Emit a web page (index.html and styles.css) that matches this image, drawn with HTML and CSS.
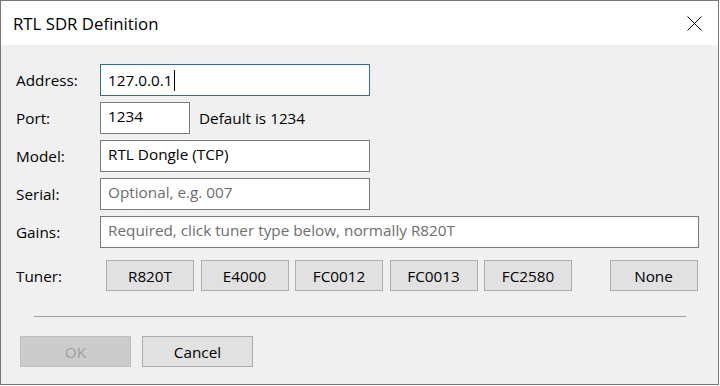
FILE: index.html
```html
<!DOCTYPE html>
<html lang="en">
<head>
  <meta charset="UTF-8">
  <title>RTL SDR Definition</title>
  <link rel="stylesheet" href="styles.css">
</head>
<body>
  <div class="window">
    <!-- title bar -->
    <div class="titlebar">
      <span class="title">RTL SDR Definition</span>
      <svg class="close" width="15" height="15" viewBox="0 0 15 15">
        <path d="M0.5 0.5 L14.5 14.5 M14.5 0.5 L0.5 14.5" stroke="#000" stroke-width="1" fill="none"/>
      </svg>
    </div>

    <div class="content">
      <div class="form">
        <label class="lbl">Address:</label>
        <div class="row">
          <div class="box wide focused">127.0.0.1<span class="caret"></span></div>
        </div>

        <label class="lbl">Port:</label>
        <div class="row">
          <div class="box port">1234</div>
          <span class="hint">Default is 1234</span>
        </div>

        <label class="lbl">Model:</label>
        <div class="row">
          <div class="box wide">RTL Dongle (TCP)</div>
        </div>

        <label class="lbl">Serial:</label>
        <div class="row">
          <div class="box wide placeholder">Optional, e.g. 007</div>
        </div>

        <label class="lbl">Gains:</label>
        <div class="row">
          <div class="box full placeholder">Required, click tuner type below, normally R820T</div>
        </div>

        <label class="lbl tuner-lbl">Tuner:</label>
        <div class="row tuners">
          <button class="btn tuner">R820T</button>
          <button class="btn tuner">E4000</button>
          <button class="btn tuner">FC0012</button>
          <button class="btn tuner">FC0013</button>
          <button class="btn tuner">FC2580</button>
          <button class="btn tuner none">None</button>
        </div>
      </div>

      <div class="separator"></div>

      <div class="actions">
        <button class="btn action" disabled>OK</button>
        <button class="btn action">Cancel</button>
      </div>
    </div>
  </div>
</body>
</html>
```

FILE: styles.css
```css
html, body {
  margin: 0;
  padding: 0;
  width: 720px;
  height: 386px;
  overflow: hidden;
  font-family: 'Open Sans', 'Noto Sans', sans-serif;
  font-size: 15.3px;
  color: #000;
}

.window {
  width: 719px;
  height: 385px;
  box-sizing: border-box;
  border: 1px solid #777;
  background-color: #f0f0f0;
}

.titlebar {
  height: 44px;
  background-color: #fff;
  display: flex;
  align-items: center;
  justify-content: space-between;
  padding: 0 16px 0 12px;
}

.title {
  font-size: 16.8px;
}

.content {
  padding: 19px 0 0 15px;
}

.form {
  display: grid;
  grid-template-columns: 84px auto;
  row-gap: 6px;
}

.lbl {
  display: flex;
  align-items: center;
  height: 32px;
}

.row {
  display: flex;
  align-items: center;
  height: 32px;
}

.box {
  height: 32px;
  box-sizing: border-box;
  border: 1px solid #7a7a7a;
  background-color: #fff;
  padding: 1px 7px 0;
  line-height: 24px;
  white-space: nowrap;
  overflow: hidden;
}

.box.wide {
  width: 270px;
}

.box.port {
  width: 90px;
}

.box.full {
  width: 599px;
}

.box.focused {
  border-color: #2e6f93;
  padding-top: 3px;
}

.box.placeholder {
  color: #6d6d6d;
}

.caret {
  display: inline-block;
  width: 1px;
  height: 21px;
  background-color: #000;
  vertical-align: -5px;
  margin-left: 1px;
}

.hint {
  margin-left: 9px;
}

.tuner-lbl,
.tuners {
  margin-top: 6px;
}

.tuners {
  height: 31px;
  margin-left: 6px;
}

.btn {
  font-family: inherit;
  font-size: 15.3px;
  color: #000;
  height: 31px;
  box-sizing: border-box;
  background-color: #e1e1e1;
  border: 1px solid #adadad;
  padding: 0;
  margin: 0;
}

.btn.tuner {
  width: 88px;
  margin-right: 6.5px;
}

.btn.none {
  margin-left: 31px;
}

.btn:disabled {
  background-color: #cccccc;
  border-color: #bfbfbf;
  color: #a0a0a0;
}

.separator {
  height: 1px;
  background-color: #a0a0a0;
  margin: 24px 0 0 18px;
  width: 652px;
}

.actions {
  display: flex;
  gap: 11px;
  margin: 19px 0 0 4px;
}

.btn.action {
  width: 111px;
}
```
